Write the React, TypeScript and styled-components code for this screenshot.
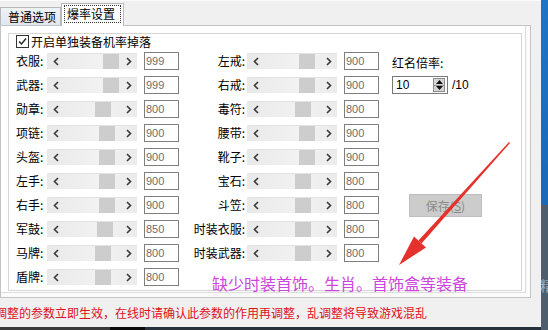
import React from 'react';
import styled, { createGlobalStyle } from 'styled-components';

const GlobalStyle = createGlobalStyle`
  html, body {
    margin: 0;
    padding: 0;
  }
  body {
    width: 548px;
    height: 330px;
    overflow: hidden;
    font-family: 'Noto Sans CJK SC', 'Liberation Sans', sans-serif;
    font-size: 12px;
    color: #000;
  }
`;

const Screen = styled.div`
  position: relative;
  display: grid;
  grid-template-columns: 541px 7px;
  grid-template-rows: 327px 3px;
  width: 548px;
  height: 330px;
  overflow: hidden;
`;

const Window = styled.div`
  display: flex;
  flex-direction: column;
  background: #f0f0f0;
  border-top: 1px solid #fbfbfb;
  padding-top: 2px;
  box-sizing: border-box;
  overflow: hidden;
`;

const SideStrip = styled.div`
  grid-row: 1 / span 2;
  grid-column: 2;
  display: flex;
  flex-direction: column;
  overflow: hidden;
`;

const SideBlue = styled.div`
  height: 205px;
  background: linear-gradient(180deg, #1f74c6, #1a68b8);
`;

const SideSlate = styled.div`
  flex: 1;
  background: #4e5d6d;
  color: #9fb1c4;
  font-size: 14px;
  line-height: 16px;
  padding-top: 72px;
  margin-left: -1px;
  white-space: nowrap;
  overflow: hidden;
`;

const Taskbar = styled.div`
  grid-row: 2;
  grid-column: 1;
  background: linear-gradient(90deg, #3a3a3a 0 110px, #0b0b0b 110px 145px, #27313c 145px);
`;

const TabStrip = styled.div`
  display: flex;
  align-items: flex-end;
  height: 22px;
`;

const Tab = styled.div<{ $active?: boolean }>`
  box-sizing: border-box;
  height: ${(p) => (p.$active ? '23px' : '18px')};
  width: ${(p) => (p.$active ? '63px' : '61px')};
  margin-bottom: ${(p) => (p.$active ? '-1px' : '0')};
  position: relative;
  z-index: ${(p) => (p.$active ? 1 : 0)};
  border: 1px solid #b8b8b8;
  border-bottom: none;
  background: ${(p) => (p.$active ? '#ffffff' : 'linear-gradient(180deg, #eef2f7, #dfe7ef)')};
  padding: ${(p) => (p.$active ? '1px 2px 0' : '0 0 0 7px')};
  line-height: 17px;
  white-space: nowrap;
`;

const FocusLabel = styled.div`
  border: 1px dotted #333;
  height: 18px;
  box-sizing: border-box;
  padding-left: 2px;
  line-height: 16px;
`;

const TabPanel = styled.div`
  width: 531px;
  height: 273px;
  box-sizing: border-box;
  border: 1px solid #c4c4c4;
  background: #ffffff;
  padding: 7px 0 0 7px;
  box-shadow: inset -4px -4px 0 #fbfbfb, inset -5px -5px 0 #dcdcdc;
`;

const GroupBox = styled.div`
  width: 514px;
  height: 258px;
  box-sizing: border-box;
  border: 1px solid #d6d6d6;
  box-shadow: inset 1px 1px 0 #ffffff;
  padding-left: 7px;
  display: flex;
  flex-direction: column;
`;

const CaptionRow = styled.label`
  display: flex;
  align-items: center;
  gap: 2px;
  height: 15px;
  line-height: 15px;
`;

const CheckBox = styled.span`
  width: 13px;
  height: 13px;
  box-sizing: border-box;
  border: 1px solid #333;
  background: #fff;
  display: flex;
  align-items: center;
  justify-content: center;
`;

const Columns = styled.div`
  display: flex;
  align-items: flex-start;
`;

const Column = styled.div<{ $gap?: number; $width?: number }>`
  display: flex;
  flex-direction: column;
  flex: none;
  width: ${(p) => (p.$width ? `${p.$width}px` : 'auto')};
  margin-left: ${(p) => p.$gap ?? 0}px;
`;

const Row = styled.div`
  display: flex;
  align-items: center;
  height: 24px;
`;

const Label = styled.span<{ $width: number; $right?: boolean }>`
  width: ${(p) => p.$width}px;
  text-align: ${(p) => (p.$right ? 'right' : 'left')};
  padding-right: ${(p) => (p.$right ? '2px' : '0')};
  box-sizing: border-box;
  line-height: 16px;
  white-space: nowrap;
`;

const ScrollBar = styled.div`
  display: flex;
  width: 90px;
  height: 16px;
  background: linear-gradient(90deg, #e9e9e9, #f2f2f2 60%, #ebebeb);
  border-top: 1px solid #e2e2e2;
  box-sizing: border-box;
`;

const ArrowButton = styled.div`
  width: 17px;
  display: flex;
  align-items: center;
  justify-content: center;
`;

const Track = styled.div`
  flex: 1;
  display: flex;
`;

const Thumb = styled.div`
  width: 16px;
  background: #cdcdcd;
`;

const ValueBox = styled.div`
  width: 35px;
  height: 18px;
  margin-left: 7px;
  box-sizing: border-box;
  border: 1px solid #7f7f7f;
  background: #fff;
  font-family: 'Liberation Sans', Arial, sans-serif;
  font-size: 11px;
  line-height: 16px;
  color: #6e6e6e;
  padding-left: 1px;
`;

const SideLabel = styled.div`
  margin-top: 6px;
  line-height: 16px;
  white-space: nowrap;
`;

const SpinRow = styled.div`
  display: flex;
  align-items: center;
  gap: 4px;
  margin-top: 5px;
  font-family: 'Liberation Sans', Arial, sans-serif;
  font-size: 12px;
`;

const SpinBox = styled.div`
  width: 56px;
  height: 18px;
  box-sizing: border-box;
  border: 1px solid #7a7a7a;
  background: #fff;
  display: flex;
  align-items: center;
  padding: 0 1px 0 3px;
`;

const SpinText = styled.span`
  flex: 1;
  line-height: 16px;
`;

const SpinButtons = styled.div`
  width: 12px;
  height: 14px;
  margin-right: 1px;
  display: flex;
  flex-direction: column;
  border: 1px solid #8c8c8c;
  box-sizing: border-box;
  background: #d6d6d6;
`;

const SpinHalf = styled.div<{ $down?: boolean }>`
  flex: 1;
  display: flex;
  align-items: center;
  justify-content: center;
  border-top: ${(p) => (p.$down ? '1px solid #9a9a9a' : 'none')};
`;

const SaveButton = styled.button`
  margin: 100px 0 0 17px;
  width: 73px;
  height: 23px;
  padding: 0;
  background: #cccccc;
  border: 1px solid #bdbdbd;
  color: #8b8b8b;
  font-family: 'Noto Sans CJK SC', sans-serif;
  font-size: 12px;
  line-height: 20px;
`;

const Note = styled.div`
  margin: 8px 0 0 27px;
  height: 20px;
  line-height: 20px;
  font-size: 16px;
  color: #cc45dc;
  white-space: nowrap;
`;

const Status = styled.div`
  height: 29px;
  display: flex;
  align-items: center;
  margin-left: -5px;
  color: #de1020;
  white-space: nowrap;
`;

const Overlay = styled.svg`
  position: absolute;
  left: 0;
  top: 0;
  pointer-events: none;
`;

const leftItems: [string, number][] = [
  ['衣服', 999],
  ['武器', 999],
  ['勋章', 800],
  ['项链', 900],
  ['头盔', 900],
  ['左手', 900],
  ['右手', 900],
  ['军鼓', 850],
  ['马牌', 800],
  ['盾牌', 800],
];

const rightItems: [string, number][] = [
  ['左戒', 900],
  ['右戒', 900],
  ['毒符', 800],
  ['腰带', 900],
  ['靴子', 900],
  ['宝石', 800],
  ['斗笠', 800],
  ['时装衣服', 800],
  ['时装武器', 800],
];

const Chevron = ({ dir }: { dir: 'left' | 'right' }) => (
  <svg width="6" height="9" viewBox="0 0 6 9">
    <polyline
      points={dir === 'left' ? '5,1 1.5,4.5 5,8' : '1,1 4.5,4.5 1,8'}
      fill="none"
      stroke="#3a3a3a"
      strokeWidth="1.6"
    />
  </svg>
);

const RateRow = ({ name, value, labelWidth, right }: { name: string; value: number; labelWidth: number; right?: boolean }) => {
  // thumb position follows the value
  const offset = 48 + (value - 800) * 0.04 - 17;
  return (
    <Row>
      <Label $width={labelWidth} $right={right}>
        {name}:
      </Label>
      <ScrollBar>
        <ArrowButton>
          <Chevron dir="left" />
        </ArrowButton>
        <Track>
          <Thumb style={{ marginLeft: offset }} />
        </Track>
        <ArrowButton>
          <Chevron dir="right" />
        </ArrowButton>
      </ScrollBar>
      <ValueBox>{value}</ValueBox>
    </Row>
  );
};

const App = () => {
  return (
    <Screen>
      <GlobalStyle />
      <Window>
        <TabStrip>
          <Tab>普通选项</Tab>
          <Tab $active>
            <FocusLabel>爆率设置</FocusLabel>
          </Tab>
        </TabStrip>
        <TabPanel>
          <GroupBox>
            <CaptionRow>
              <CheckBox>
                <svg width="9" height="9" viewBox="0 0 9 9">
                  <polyline points="1,4.5 3.5,7 8,1.5" fill="none" stroke="#222" strokeWidth="1.4" />
                </svg>
              </CheckBox>
              开启单独装备机率掉落
            </CaptionRow>
            <Columns>
              <Column $width={163}>
                {leftItems.map(([name, value]) => (
                  <RateRow key={name} name={name} value={value} labelWidth={31} />
                ))}
              </Column>
              <Column $gap={6} $width={194}>
                {rightItems.map(([name, value]) => (
                  <RateRow key={name} name={name} value={value} labelWidth={62} right />
                ))}
                <Note>缺少时装首饰。生肖。首饰盒等装备</Note>
              </Column>
              <Column $gap={13}>
                <SideLabel>红名倍率:</SideLabel>
                <SpinRow>
                  <SpinBox>
                    <SpinText>10</SpinText>
                    <SpinButtons>
                      <SpinHalf>
                        <svg width="7" height="4" viewBox="0 0 7 4">
                          <polygon points="0,4 3.5,0 7,4" fill="#111" />
                        </svg>
                      </SpinHalf>
                      <SpinHalf $down>
                        <svg width="7" height="4" viewBox="0 0 7 4">
                          <polygon points="0,0 7,0 3.5,4" fill="#111" />
                        </svg>
                      </SpinHalf>
                    </SpinButtons>
                  </SpinBox>
                  /10
                </SpinRow>
                <SaveButton disabled>
                  保存(<u>S</u>)
                </SaveButton>
              </Column>
            </Columns>
          </GroupBox>
        </TabPanel>
        <Status>调整的参数立即生效，在线时请确认此参数的作用再调整，乱调整将导致游戏混乱</Status>
      </Window>
      <SideStrip>
        <SideBlue />
        <SideSlate>精</SideSlate>
      </SideStrip>
      <Taskbar />
      <Overlay width="548" height="330" viewBox="0 0 548 330">
        <polygon points="509,142 510,143 421.5,243.5 418.5,240.5" fill="#e5312c" />
        <polygon points="399,265 414,236.5 426,247.5" fill="#e5312c" />
      </Overlay>
    </Screen>
  );
};

export default App;
